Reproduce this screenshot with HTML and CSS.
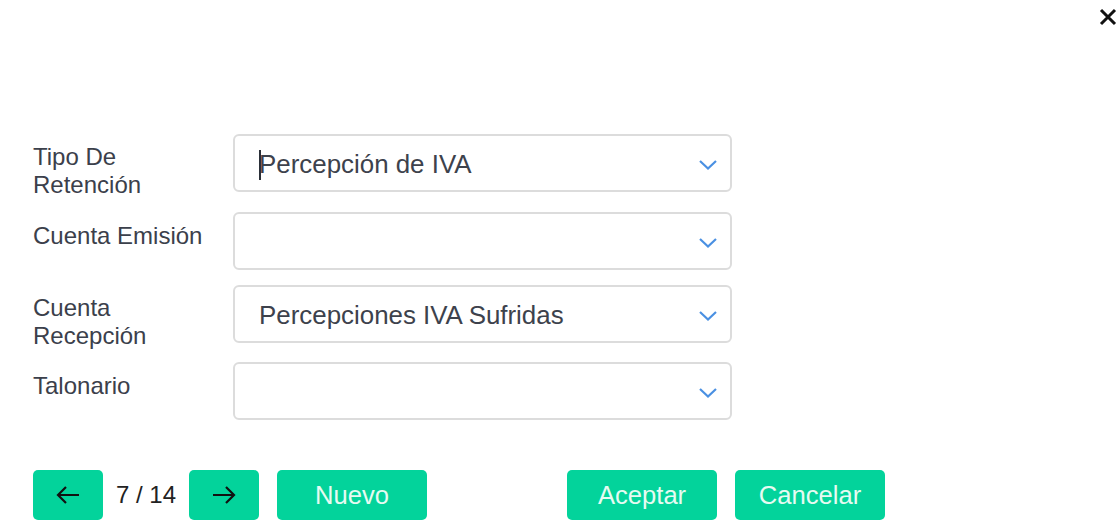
FILE: index.html
```html
<!DOCTYPE html>
<html lang="es">
<head>
<meta charset="utf-8">
<link rel="stylesheet" href="styles.css">
</head>
<body>
<div class="dialog">
  <div class="header">
    <button class="close" aria-label="Cerrar">
      <svg width="18" height="18" viewBox="0 0 18 18"><path d="M2 2 L16 16 M16 2 L2 16" stroke="#111" stroke-width="3" stroke-linecap="butt"/></svg>
    </button>
  </div>
  <div class="form">
    <div class="row row-1">
      <label class="label">Tipo De Retención</label>
      <div class="select"><span class="value"><span class="caret"></span>Percepción de IVA</span>
        <svg class="chev" width="20" height="12" viewBox="0 0 20 12"><path d="M2 2 L10 9.5 L18 2" fill="none" stroke="#4a90e2" stroke-width="2.2"/></svg></div>
    </div>
    <div class="row row-2">
      <label class="label">Cuenta Emisión</label>
      <div class="select"><span class="value"></span>
        <svg class="chev" width="20" height="12" viewBox="0 0 20 12"><path d="M2 2 L10 9.5 L18 2" fill="none" stroke="#4a90e2" stroke-width="2.2"/></svg></div>
    </div>
    <div class="row row-3">
      <label class="label">Cuenta Recepción</label>
      <div class="select"><span class="value">Percepciones IVA Sufridas</span>
        <svg class="chev" width="20" height="12" viewBox="0 0 20 12"><path d="M2 2 L10 9.5 L18 2" fill="none" stroke="#4a90e2" stroke-width="2.2"/></svg></div>
    </div>
    <div class="row row-4">
      <label class="label">Talonario</label>
      <div class="select"><span class="value"></span>
        <svg class="chev" width="20" height="12" viewBox="0 0 20 12"><path d="M2 2 L10 9.5 L18 2" fill="none" stroke="#4a90e2" stroke-width="2.2"/></svg></div>
    </div>
  </div>
  <div class="actions">
    <button class="btn btn-arrow" aria-label="Anterior">
      <svg width="26" height="20" viewBox="0 0 26 20"><path d="M24 10 H3 M11 2 L3 10 L11 18" fill="none" stroke="#111" stroke-width="2.2"/></svg>
    </button>
    <span class="counter">7 / 14</span>
    <button class="btn btn-arrow" aria-label="Siguiente">
      <svg width="26" height="20" viewBox="0 0 26 20"><path d="M2 10 H23 M15 2 L23 10 L15 18" fill="none" stroke="#111" stroke-width="2.2"/></svg>
    </button>
    <button class="btn btn-text btn-new">Nuevo</button>
    <button class="btn btn-text btn-accept">Aceptar</button>
    <button class="btn btn-text">Cancelar</button>
  </div>
</div>
</body>
</html>
```
FILE: styles.css
```css
* { box-sizing: border-box; }
html, body { margin: 0; padding: 0; background: #fff; }
body { font-family: "Liberation Sans", Arial, sans-serif; }
.dialog { width: 1120px; height: 524px; padding: 0 0 0 33px; }
.header { height: 134px; display: flex; justify-content: flex-end; align-items: flex-start; padding-top: 8px; padding-right: 3px; }
.close { border: 0; background: none; padding: 0; width: 18px; height: 18px; display: flex; cursor: pointer; }
.form { display: flex; flex-direction: column; }
.row { display: flex; align-items: flex-start; }
.row-1 { margin-bottom: 13px; }
.row-2 { margin-bottom: 15px; }
.row-3 { margin-bottom: 12px; }
.row-4 { margin-bottom: 50px; }
.label { width: 180px; margin-right: 20px; padding-top: 9px; font-size: 24px; line-height: 28px; color: #3b404b; }
.row-2 .label, .row-4 .label { padding-top: 10px; }
.select { width: 499px; height: 58px; border: 2px solid #dcdcdc; border-radius: 6px; display: flex; align-items: center; justify-content: space-between; padding: 3px 12px 0 24px; }
.value { font-size: 25.9px; color: #3d424c; white-space: nowrap; display: flex; align-items: center; }
.caret { display: inline-block; width: 2px; height: 30px; background: #2a2f38; margin-right: -2px; }
.chev { display: block; margin-top: 0; }
.actions { display: flex; align-items: center; }
.btn { border: 0; background: #03d39b; border-radius: 5px; height: 50px; display: flex; align-items: center; justify-content: center; cursor: pointer; font-family: "Liberation Sans", Arial, sans-serif; padding: 0; }
.btn-arrow { width: 70px; }
.counter { font-size: 24px; color: #222; margin: 0 13px 0 13px; }
.btn-text { width: 150px; font-size: 25.6px; color: #e6fbf2; margin-left: 18px; }
.btn-new { margin-left: 18px; }
.btn-accept { margin-left: 140px; }
```
